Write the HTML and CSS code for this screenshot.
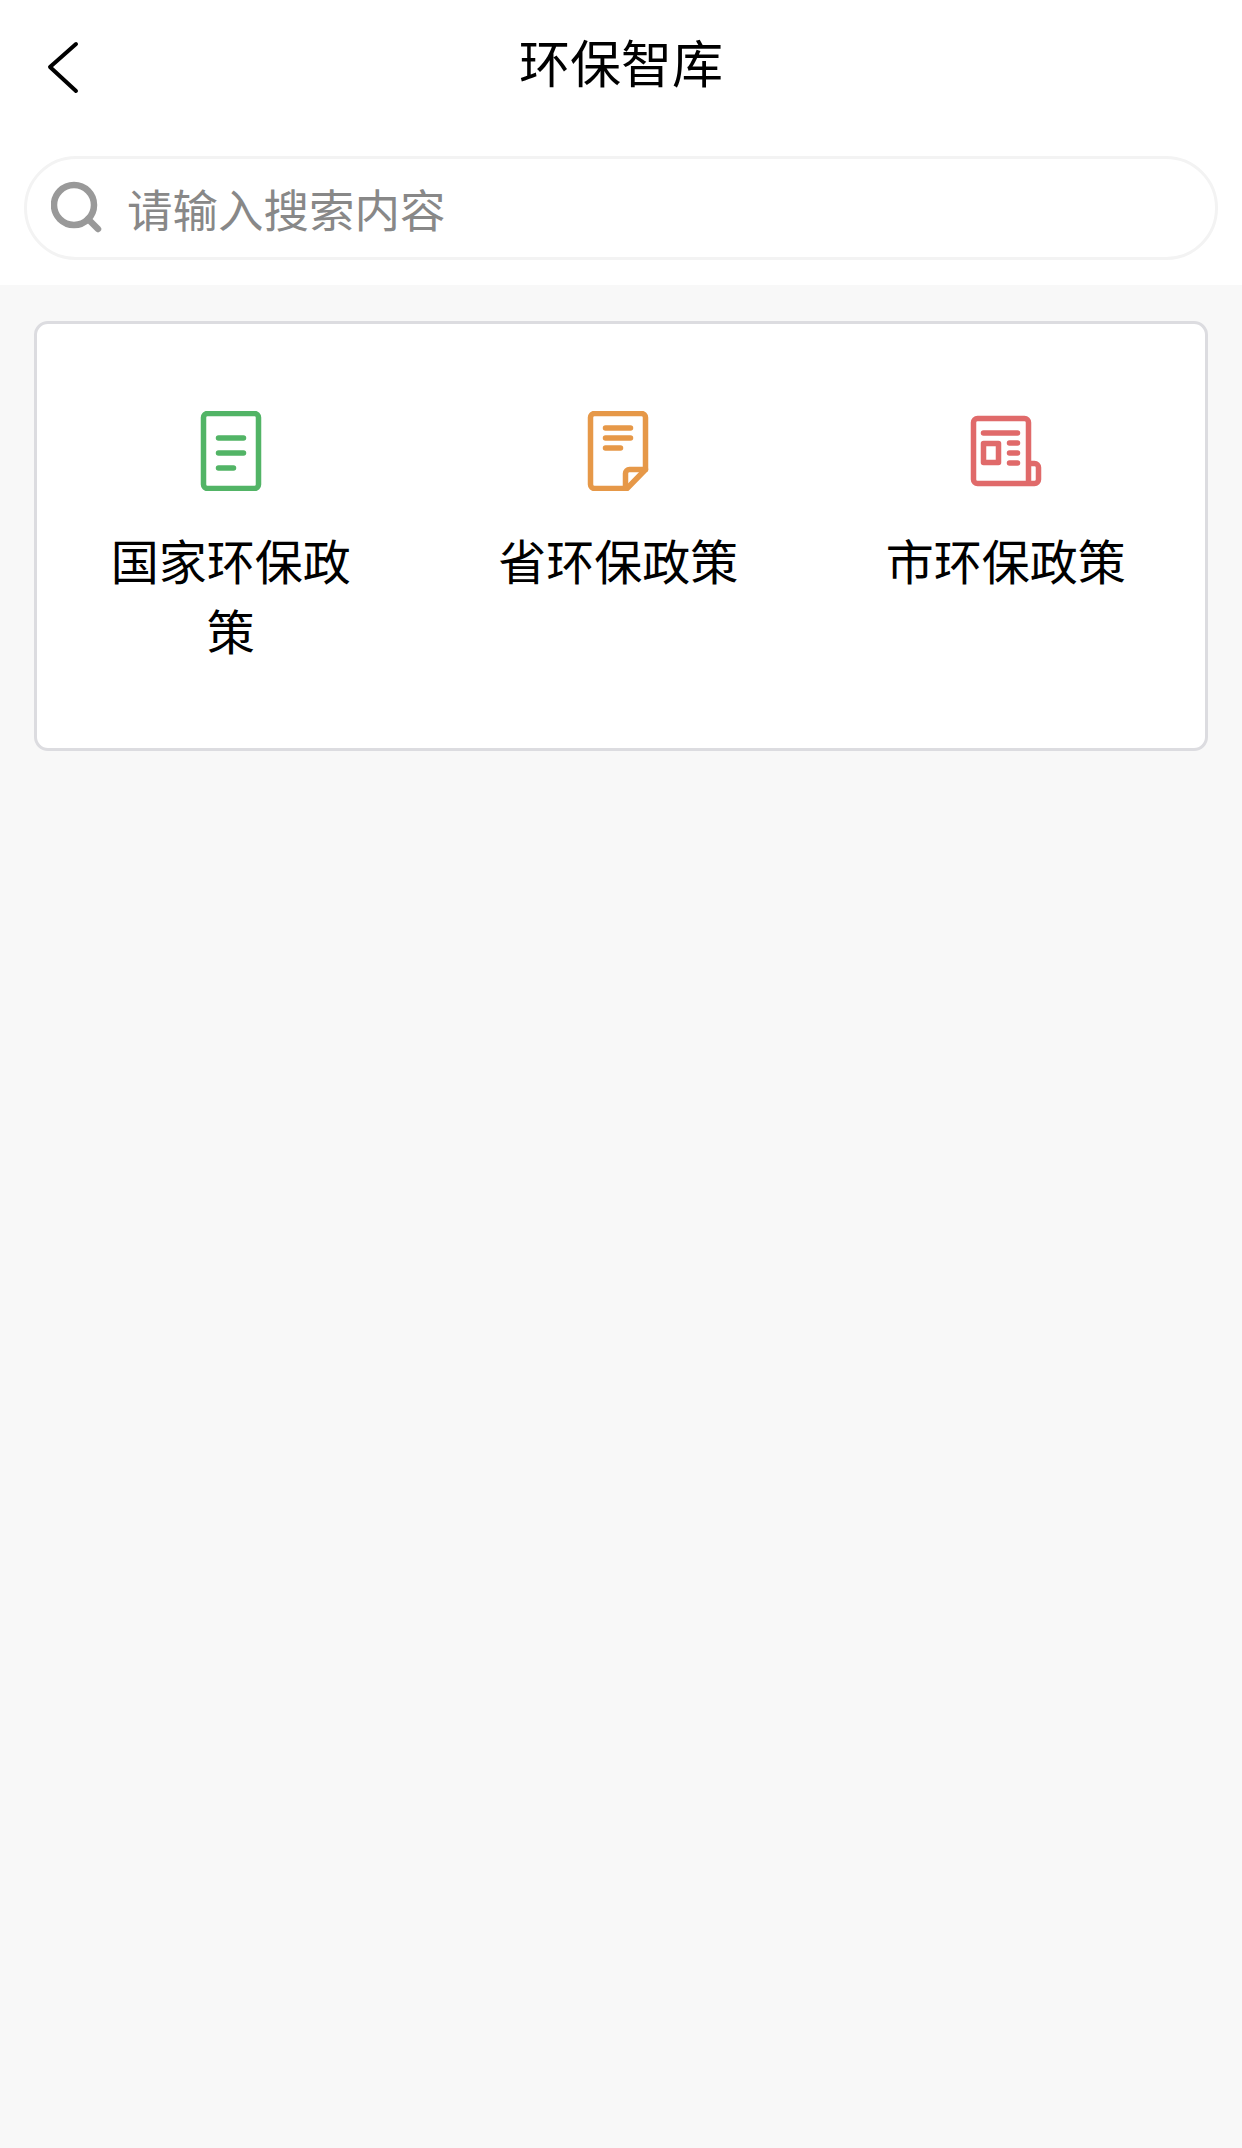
FILE: index.html
```html
<!DOCTYPE html>
<html lang="zh-CN">
<head>
<meta charset="utf-8">
<title>环保智库</title>
<link rel="stylesheet" href="styles.css">
</head>
<body>
<div class="top">
  <header class="nav">
    <svg class="back" width="80" height="80" viewBox="0 0 80 80"><path d="M56 4 L30 27 L56 51"/></svg>
    <h1 class="title">环保智库</h1>
  </header>
  <div class="search-wrap">
    <div class="search">
      <svg class="search-icon" width="56" height="56" viewBox="0 0 56 56"><circle cx="23" cy="25" r="20"/><path d="M37 39 L47 49"/></svg>
      <span class="placeholder">请输入搜索内容</span>
    </div>
  </div>
</div>
<main class="card">
  <div class="item">
    <svg class="icon green" width="80" height="80" viewBox="0 0 80 80"><rect x="12.5" y="2.5" width="55" height="75" rx="4"/><path d="M27.5 27H52.5M27.5 42H52.5M27.5 57H42.5"/></svg>
    <div class="label">国家环保政策</div>
  </div>
  <div class="item">
    <svg class="icon orange" width="80" height="80" viewBox="0 0 80 80"><path d="M47.5 77.5H16.5a4 4 0 0 1-4-4V6.5a4 4 0 0 1 4-4H63.5a4 4 0 0 1 4 4V58.5L49 77.5"/><path d="M47.5 77V62.5a4 4 0 0 1 4-4H67.5"/><path d="M27.5 17H52.5M27.5 27H52.5M27.5 37H42.5"/></svg>
    <div class="label">省环保政策</div>
  </div>
  <div class="item">
    <svg class="icon red" width="80" height="80" viewBox="0 0 80 80"><path d="M62.5 52.5V11.5a4 4 0 0 0-4-4H11.5a4 4 0 0 0-4 4V68.5a4 4 0 0 0 4 4H68.5a4 4 0 0 0 4-4V56.5a4 4 0 0 0-4-4H62.5V72"/><rect x="17.5" y="32.5" width="15" height="19"/><path d="M17.5 22H51.5M43.5 32H51.5M43.5 42H51.5M43.5 52H51.5"/></svg>
    <div class="label">市环保政策</div>
  </div>
</main>
</body>
</html>
```

FILE: styles.css
```css
html, body {
  margin: 0;
  padding: 0;
}
body {
  width: 1242px;
  min-height: 2148px;
  background: #f8f8f8;
  font-family: "Noto Sans CJK SC", "Liberation Sans", sans-serif;
  color: #000;
}
.top {
  background: #fff;
}
.nav {
  height: 130px;
  box-sizing: border-box;
  padding-bottom: 8px;
  display: flex;
  align-items: center;
  justify-content: center;
  position: relative;
}
.back {
  position: absolute;
  left: 20px;
  top: 40px;
  fill: none;
  stroke: #000;
  stroke-width: 4;
  stroke-linecap: round;
  stroke-linejoin: round;
}
.title {
  margin: 0;
  font-size: 51px;
  font-weight: 400;
  line-height: 70px;
}
.search-wrap {
  padding: 26px 24px 25px;
}
.search {
  height: 104px;
  box-sizing: border-box;
  border: 3px solid #f3f3f3;
  border-radius: 52px;
  display: flex;
  align-items: center;
  padding-left: 24px;
}
.search-icon {
  flex: none;
  fill: none;
  stroke: #999;
  stroke-width: 6.5;
  stroke-linecap: round;
}
.placeholder {
  margin-left: 20px;
  font-size: 45.5px;
  color: #888;
  line-height: 60px;
}
.card {
  margin: 36px 34px 0;
  height: 430px;
  box-sizing: border-box;
  background: #fff;
  border: 3px solid #dcdce0;
  border-radius: 14px;
  display: grid;
  grid-template-columns: repeat(3, 387.5px);
  align-items: start;
  padding-top: 87px;
}
.item {
  display: flex;
  flex-direction: column;
  align-items: center;
  padding: 0 68px;
}
.icon {
  display: block;
  fill: none;
  stroke-width: 5.5;
  stroke-linecap: round;
  stroke-linejoin: round;
}
.green { stroke: #52b466; }
.orange { stroke: #e69848; }
.red { stroke: #e06a6a; }
.label {
  margin-top: 33px;
  font-size: 48px;
  line-height: 70px;
  text-align: center;
}
```
